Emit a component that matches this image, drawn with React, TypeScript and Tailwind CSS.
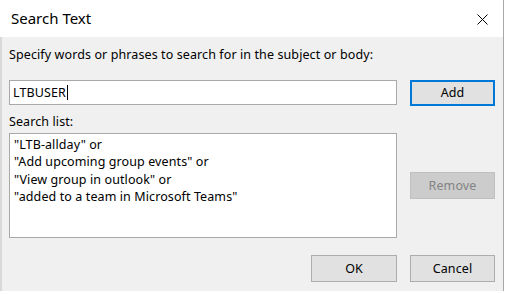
import React from "react";

export default function App() {
  const font = { fontFamily: '"Noto Sans", "Open Sans", sans-serif' };
  return (
    <div className="w-[506px] h-[294px] bg-white flex flex-col overflow-hidden text-black" style={font}>
      <div className="flex flex-1 min-h-0">
        <div className="flex flex-col w-[504px] border-r border-[#a8a8a8]">
          <div className="h-[37px] flex items-center justify-between bg-white pl-[11px] pr-[15px] shrink-0">
            <span className="text-[15px] leading-[18px] mt-[-1px]">Search Text</span>
            <svg width="11" height="11" viewBox="0 0 11 11" className="mt-[1px]">
              <path d="M0.5 0.5 L10.5 10.5 M10.5 0.5 L0.5 10.5" stroke="#000" strokeWidth="1" />
            </svg>
          </div>
          <div className="flex-1 bg-[#f0f0f0] border-l-2 border-[#d9d9d9] pl-[7px] pt-[10px] text-[12.5px] tracking-[0.1px] leading-[16px]">
            <div className="h-[16px]">Specify words or phrases to search for in the subject or body:</div>
            <div className="flex mt-[17px] gap-[13px]">
              <div className="w-[388px] h-[25px] bg-white border border-[#a9a9a9] flex items-center pl-[3px]">
                <span>LTBUSER</span>
                <span className="w-[1px] h-[15px] bg-black ml-[1px]"></span>
              </div>
              <div className="w-[85px] h-[26px] bg-[#e1e1e1] border-2 border-[#0078d7] flex items-center justify-center">
                Add
              </div>
            </div>
            <div className="h-[16px] mt-[8px]">Search list:</div>
            <div className="flex mt-[3px] gap-[13px]">
              <div className="w-[388px] h-[105px] bg-white border border-[#a9a9a9] pl-[4px] pt-[2px] leading-[17.3px]">
                <div>"LTB-allday" or</div>
                <div>"Add upcoming group events" or</div>
                <div>"View group in outlook" or</div>
                <div>"added to a team in Microsoft Teams"</div>
              </div>
              <div className="w-[85px] h-[27px] mt-[39px] bg-[#cccccc] border border-[#bfbfbf] flex items-center justify-center text-[#838383]">
                Remove
              </div>
            </div>
            <div className="flex w-[486px] justify-end gap-[13px] mt-[17px]">
              <div className="w-[86px] h-[27px] bg-[#e1e1e1] border border-[#adadad] flex items-center justify-center">
                OK
              </div>
              <div className="w-[85px] h-[27px] bg-[#e1e1e1] border border-[#adadad] flex items-center justify-center">
                Cancel
              </div>
            </div>
          </div>
        </div>
        <div className="w-[1px] bg-white"></div>
      </div>
      <div className="h-[3px] bg-white shrink-0"></div>
    </div>
  );
}
